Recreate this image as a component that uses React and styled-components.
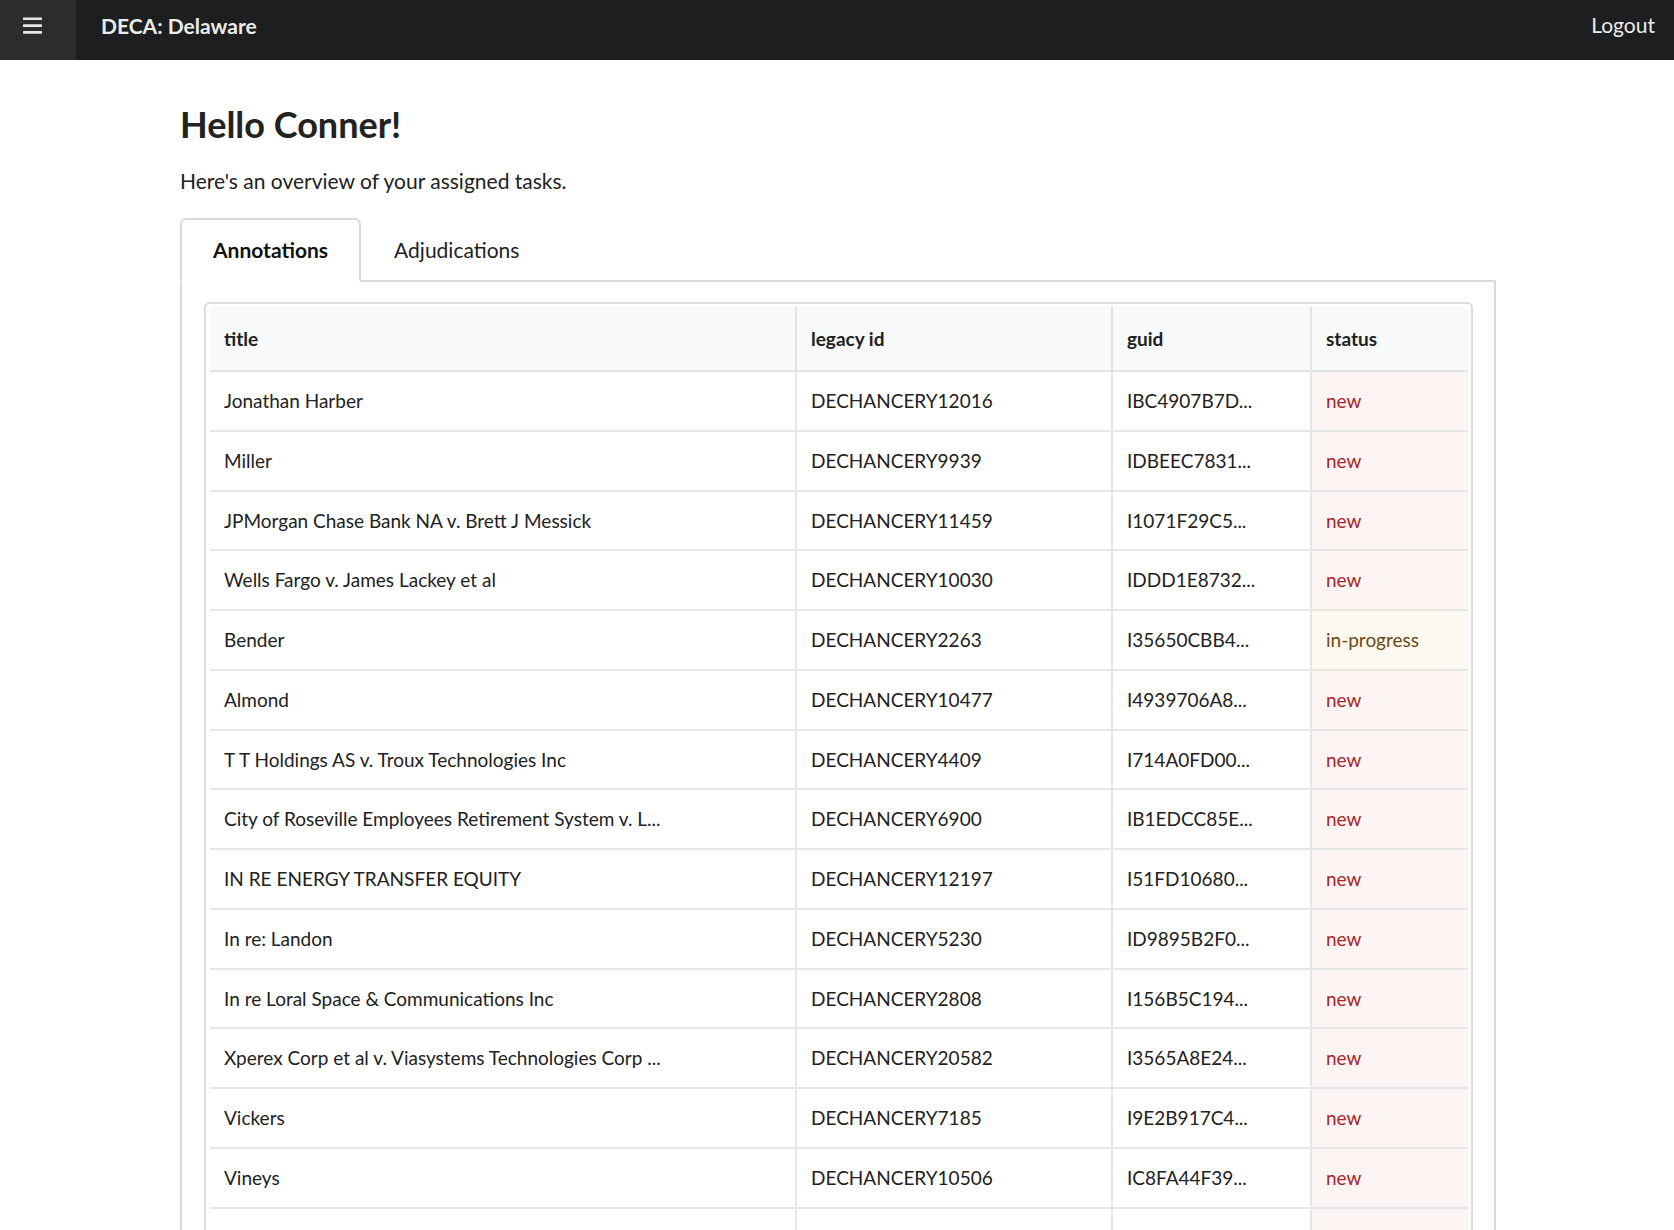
import React from 'react';
import styled, { createGlobalStyle } from 'styled-components';

const GlobalStyle = createGlobalStyle`
  body {
    margin: 0;
    font-family: Lato, "Open Sans", sans-serif;
    color: #212121;
    background: #fff;
  }
`;

const rows = [
  { title: 'Jonathan Harber', legacy: 'DECHANCERY12016', guid: 'IBC4907B7D...', status: 'new' },
  { title: 'Miller', legacy: 'DECHANCERY9939', guid: 'IDBEEC7831...', status: 'new' },
  { title: 'JPMorgan Chase Bank NA v. Brett J Messick', legacy: 'DECHANCERY11459', guid: 'I1071F29C5...', status: 'new' },
  { title: 'Wells Fargo v. James Lackey et al', legacy: 'DECHANCERY10030', guid: 'IDDD1E8732...', status: 'new' },
  { title: 'Bender', legacy: 'DECHANCERY2263', guid: 'I35650CBB4...', status: 'in-progress' },
  { title: 'Almond', legacy: 'DECHANCERY10477', guid: 'I4939706A8...', status: 'new' },
  { title: 'T T Holdings AS v. Troux Technologies Inc', legacy: 'DECHANCERY4409', guid: 'I714A0FD00...', status: 'new' },
  { title: 'City of Roseville Employees Retirement System v. L...', legacy: 'DECHANCERY6900', guid: 'IB1EDCC85E...', status: 'new' },
  { title: 'IN RE ENERGY TRANSFER EQUITY', legacy: 'DECHANCERY12197', guid: 'I51FD10680...', status: 'new' },
  { title: 'In re: Landon', legacy: 'DECHANCERY5230', guid: 'ID9895B2F0...', status: 'new' },
  { title: 'In re Loral Space & Communications Inc', legacy: 'DECHANCERY2808', guid: 'I156B5C194...', status: 'new' },
  { title: 'Xperex Corp et al v. Viasystems Technologies Corp ...', legacy: 'DECHANCERY20582', guid: 'I3565A8E24...', status: 'new' },
  { title: 'Vickers', legacy: 'DECHANCERY7185', guid: 'I9E2B917C4...', status: 'new' },
  { title: 'Vineys', legacy: 'DECHANCERY10506', guid: 'IC8FA44F39...', status: 'new' },
  { title: 'Kahn v. Kolberg Kravis Roberts & Co', legacy: 'DECHANCERY3317', guid: 'I2F7A1B0C6...', status: 'new' },
];

const Topbar = styled.header`
  display: flex;
  align-items: stretch;
  height: 60px;
  background: #1d1e20;
  color: #ececec;
`;

const MenuButton = styled.div`
  width: 76px;
  background: #2b2c2e;
  display: flex;
  padding: 17px 0 0 23px;
  box-sizing: border-box;
`;

const Brand = styled.div`
  font-size: 21px;
  font-weight: 700;
  padding-left: 25px;
  padding-bottom: 9px;
  display: flex;
  align-items: center;
`;

const Logout = styled.div`
  margin-left: auto;
  font-size: 21px;
  padding-right: 19px;
  padding-bottom: 12px;
  display: flex;
  align-items: center;
`;

const Main = styled.main`
  width: 1316px;
  margin: 0 auto;
  padding: 43px 0 0 2px;
`;

const Heading = styled.h1`
  margin: 0;
  font-size: 36px;
  font-weight: 700;
  line-height: 1.2;
  color: #222;
`;

const Intro = styled.p`
  margin: 20px 0 22px;
  font-size: 21px;
  line-height: 30px;
`;

const TabList = styled.div`
  display: flex;
`;

const Tab = styled.div`
  padding: 18px 31px;
  font-size: 21px;
  line-height: 24px;
  font-weight: ${p => (p.active ? 700 : 400)};
  color: ${p => (p.active ? '#111' : '#222')};
  border: 2px solid ${p => (p.active ? '#dadada' : 'transparent')};
  border-bottom-color: ${p => (p.active ? '#fff' : 'transparent')};
  border-radius: 6px 6px 0 0;
  background: ${p => (p.active ? '#fff' : 'transparent')};
  margin-bottom: -2px;
  position: ${p => (p.active ? 'relative' : 'static')};
`;

const TabPanel = styled.section`
  border: 2px solid #dadada;
  padding: 20px 21px 21px 22px;
`;

const Card = styled.div`
  border: 2px solid #dcdcdc;
  border-radius: 6px;
  padding: 3px 3px 3px 4px;
`;

const Table = styled.table`
  width: 100%;
  table-layout: fixed;
  border-collapse: collapse;
  font-size: 19px;
`;

const HeadCell = styled.th`
  text-align: left;
  font-weight: 700;
  background: #f8f9fa;
  padding: 18px 14px;
  line-height: 27px;
  border-bottom: 2px solid #e3e3e3;
  border-left: 2px solid #e3e3e3;
  &:first-child {
    border-left: none;
    border-top-left-radius: 5px;
  }
  &:last-child {
    border-top-right-radius: 5px;
  }
`;

const Cell = styled.td`
  padding: 15px 14px;
  line-height: 27.75px;
  border-bottom: 2px solid #e6e6e6;
  border-left: 2px solid #e6e6e6;
  white-space: nowrap;
  overflow: hidden;
  &:first-child {
    border-left: none;
  }
`;

const StatusCell = styled(Cell)`
  background: ${p => (p.status === 'new' ? '#fdf4f4' : '#fefaf2')};
  color: ${p => (p.status === 'new' ? '#a8272b' : '#6a4a12')};
`;

function Hamburger() {
  return (
    <svg width="19" height="17" viewBox="0 0 19 17">
      <rect x="0" y="0.5" width="19" height="2.6" rx="0.6" fill="#e8e8e8" />
      <rect x="0" y="7.3" width="19" height="2.6" rx="0.6" fill="#e8e8e8" />
      <rect x="0" y="14.1" width="19" height="2.6" rx="0.6" fill="#e8e8e8" />
    </svg>
  );
}

export default function App() {
  return (
    <>
      <GlobalStyle />
      <Topbar>
        <MenuButton>
          <Hamburger />
        </MenuButton>
        <Brand>DECA: Delaware</Brand>
        <Logout>Logout</Logout>
      </Topbar>
      <Main>
        <Heading>Hello Conner!</Heading>
        <Intro>Here's an overview of your assigned tasks.</Intro>
        <TabList>
          <Tab active>Annotations</Tab>
          <Tab>Adjudications</Tab>
        </TabList>
        <TabPanel>
          <Card>
            <Table>
              <colgroup>
                <col style={{ width: 586 }} />
                <col style={{ width: 316 }} />
                <col style={{ width: 199 }} />
                <col />
              </colgroup>
              <thead>
                <tr>
                  <HeadCell>title</HeadCell>
                  <HeadCell>legacy id</HeadCell>
                  <HeadCell>guid</HeadCell>
                  <HeadCell>status</HeadCell>
                </tr>
              </thead>
              <tbody>
                {rows.map(r => (
                  <tr key={r.legacy}>
                    <Cell>{r.title}</Cell>
                    <Cell>{r.legacy}</Cell>
                    <Cell>{r.guid}</Cell>
                    <StatusCell status={r.status}>{r.status}</StatusCell>
                  </tr>
                ))}
              </tbody>
            </Table>
          </Card>
        </TabPanel>
      </Main>
    </>
  );
}
